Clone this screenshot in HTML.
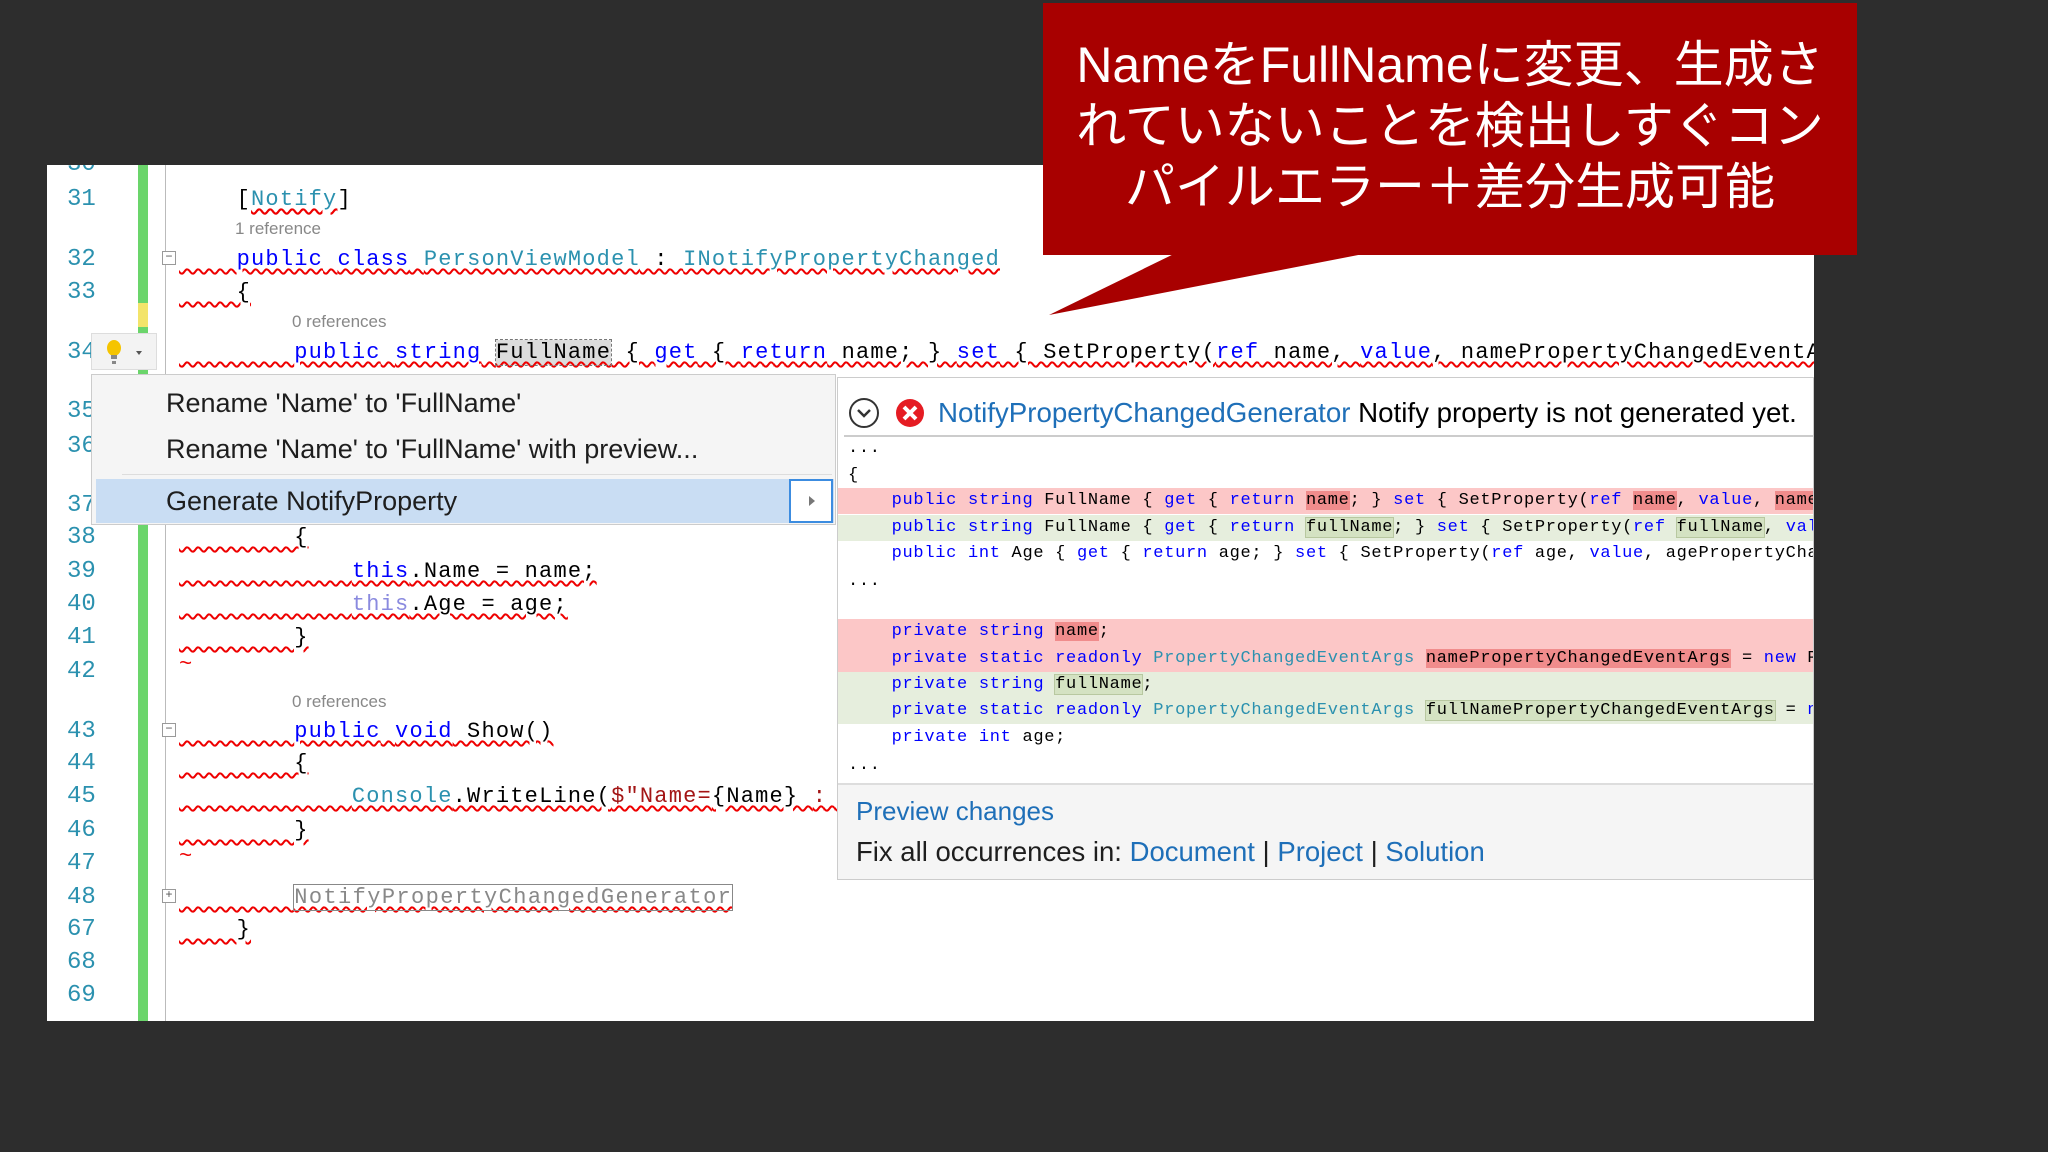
<!DOCTYPE html>
<html><head><meta charset="utf-8"><style>
*{margin:0;padding:0;box-sizing:border-box}
body{width:2048px;height:1152px;background:#2d2d2d;position:relative;overflow:hidden;font-family:"Liberation Sans",sans-serif}
.ed{position:absolute;left:47px;top:165px;width:1767px;height:856px;background:#fff;overflow:hidden}
.ln{position:absolute;left:20px;width:60px;font:24px "Liberation Mono",monospace;color:#2b91af;line-height:30px;margin-top:3px}
.c{position:absolute;left:132px;white-space:pre;font:22px "Liberation Mono",monospace;letter-spacing:1.2px;line-height:30px;color:#000;text-decoration:underline wavy #e00;text-decoration-thickness:1.5px;text-underline-offset:3px;margin-top:3px}
.k{color:#0000ff}.t{color:#2b91af}.s{color:#a31515}
.ref{position:absolute;font-size:17px;color:#888;white-space:pre;margin-top:2px}
.box{position:absolute;left:115px;width:14px;height:14px;border:1px solid #999;background:#fff;font:12px/11px "Liberation Mono";text-align:center;color:#555}
.menu{position:absolute;left:91px;top:374px;width:745px;height:151px;background:#f5f5f5;border:1px solid #ccc;font-size:27px;color:#1e1e1e}
.pv{position:absolute;left:837px;top:377px;width:977px;height:503px;background:#fff;border:1px solid #ccc;overflow:hidden}
.d{position:absolute;left:0;width:1000px;height:26px;white-space:pre;font:17px "Liberation Mono",monospace;letter-spacing:0.7px;line-height:26px;padding-left:10px}
.rd{background:#fcc7c7}.gr{background:#e6eedd}
.hr{background:#f08c8c}.hg{background:#d4e2c2;outline:1px solid #b8c8a0}
.lk{color:#1e6fb8}
</style></head><body>

<div class="ed">
 <div style="position:absolute;left:91px;top:0;width:10px;height:856px;background:#6bd56b"></div>
 <div style="position:absolute;left:91px;top:138px;width:10px;height:24px;background:#f3e46a"></div>
 <div style="position:absolute;left:118px;top:0;width:1px;height:856px;background:#bbb"></div>

 <div class="ln" style="top:-18px">30</div>
 <div class="ln" style="top:17px">31</div>
 <div class="ln" style="top:77px">32</div>
 <div class="ln" style="top:110px">33</div>
 <div class="ln" style="top:170px">34</div>
 <div class="ln" style="top:229px">35</div>
 <div class="ln" style="top:264px">36</div>
 <div class="ln" style="top:323px">37</div>
 <div class="ln" style="top:355px">38</div>
 <div class="ln" style="top:389px">39</div>
 <div class="ln" style="top:422px">40</div>
 <div class="ln" style="top:455px">41</div>
 <div class="ln" style="top:489px">42</div>
 <div class="ln" style="top:549px">43</div>
 <div class="ln" style="top:581px">44</div>
 <div class="ln" style="top:614px">45</div>
 <div class="ln" style="top:648px">46</div>
 <div class="ln" style="top:681px">47</div>
 <div class="ln" style="top:715px">48</div>
 <div class="ln" style="top:747px">67</div>
 <div class="ln" style="top:780px">68</div>
 <div class="ln" style="top:813px">69</div>

 <div class="c" style="top:17px;text-decoration:none">    [<span class="t" style="text-decoration:underline wavy #e00">Notify</span>]</div>
 <div class="ref" style="left:188px;top:52px">1 reference</div>
 <div class="box" style="top:86px">−</div>
 <div class="c" style="top:77px">    <span class="k">public</span> <span class="k">class</span> <span class="t">PersonViewModel</span> : <span class="t">INotifyPropertyChanged</span></div>
 <div class="c" style="top:110px">    {</div>
 <div class="ref" style="left:245px;top:145px">0 references</div>
 <div class="c" style="top:170px">        <span class="k">public</span> <span class="k">string</span> <span style="background:#dcdcdc;outline:1px dashed #777">FullName</span> { <span class="k">get</span> { <span class="k">return</span> name; } <span class="k">set</span> { SetProperty(<span class="k">ref</span> name, <span class="k">value</span>, namePropertyChangedEventArgs); } }</div>
 <div class="c" style="top:355px">        {</div>
 <div class="c" style="top:389px">            <span class="k">this</span>.Name = name;</div>
 <div class="c" style="top:422px">            <span class="k" style="color:#8a8adf">this</span>.Age = age;</div>
 <div class="c" style="top:455px">        }</div>
 <div class="c" style="top:482px;text-decoration:none;color:#e00">~</div>
 <div class="ref" style="left:245px;top:525px">0 references</div>
 <div class="box" style="top:558px">−</div>
 <div class="c" style="top:549px">        <span class="k">public</span> <span class="k">void</span> Show()</div>
 <div class="c" style="top:581px">        {</div>
 <div class="c" style="top:614px">            <span class="t">Console</span>.WriteLine(<span class="s">$"Name=</span>{Name} <span class="s">: </span></div>
 <div class="c" style="top:648px">        }</div>
 <div class="c" style="top:674px;text-decoration:none;color:#e00">~</div>
 <div class="box" style="top:724px">+</div>
 <div class="c" style="top:715px">        <span style="color:#888;outline:1px solid #888;text-decoration:none;letter-spacing:1.4px">NotifyPropertyChangedGenerator</span></div>
 <div class="c" style="top:747px">    }</div>
</div>

<!-- lightbulb -->
<div style="position:absolute;left:91px;top:333px;width:66px;height:37px;background:#f3f3f3;border:1px solid #ddd">
 <svg width="66" height="37"><ellipse cx="22" cy="14" rx="7" ry="8" fill="#f5c400"/><rect x="19" y="21" width="6" height="4" fill="#888"/><rect x="20" y="27" width="4" height="3" fill="#888"/><path d="M44 17 l6 0 l-3 4z" fill="#555"/></svg>
</div>

<div class="menu">
 <div style="position:absolute;left:74px;top:13px">Rename 'Name' to 'FullName'</div>
 <div style="position:absolute;left:74px;top:59px">Rename 'Name' to 'FullName' with preview...</div>
 <div style="position:absolute;left:30px;top:99px;width:710px;height:1px;background:#ddd"></div>
 <div style="position:absolute;left:4px;top:104px;width:738px;height:44px;background:#c9ddf3"></div>
 <div style="position:absolute;left:74px;top:111px">Generate NotifyProperty</div>
 <div style="position:absolute;left:697px;top:104px;width:44px;height:44px;border:2px solid #3c8ce0;background:#fff"><svg width="40" height="40"><path d="M18 15 l6 5 l-6 5z" fill="#777"/></svg></div>
</div>

<div class="pv">
 <svg style="position:absolute;left:10px;top:18px" width="90" height="34"><circle cx="16" cy="17" r="14" fill="#fff" stroke="#333" stroke-width="2"/><path d="M10 14 l6 6 l6 -6" stroke="#333" stroke-width="2.5" fill="none"/><circle cx="62" cy="17" r="14" fill="#e51c23"/><path d="M56 11 l12 12 M68 11 l-12 12" stroke="#fff" stroke-width="4"/></svg>
 <div style="position:absolute;left:100px;top:19px;font-size:27.7px;white-space:nowrap"><span class="lk">NotifyPropertyChangedGenerator</span> Notify property is not generated yet.</div>
 <div style="position:absolute;left:6px;top:57px;width:980px;height:2px;background:#ccc"></div>
 <div class="d" style="top:58px;padding-left:10px">...</div>
 <div class="d" style="top:85px">{</div>
 <div class="d rd" style="top:110px">    <span class="k">public</span> <span class="k">string</span> FullName { <span class="k">get</span> { <span class="k">return</span> <span class="hr">name</span>; } <span class="k">set</span> { SetProperty(<span class="k">ref</span> <span class="hr">name</span>, <span class="k">value</span>, <span class="hr">namePropertyChangedEventArgs</span>); } }</div>
 <div class="d gr" style="top:137px">    <span class="k">public</span> <span class="k">string</span> FullName { <span class="k">get</span> { <span class="k">return</span> <span class="hg">fullName</span>; } <span class="k">set</span> { SetProperty(<span class="k">ref</span> <span class="hg">fullName</span>, <span class="k">value</span>, fullName</div>
 <div class="d" style="top:163px">    <span class="k">public</span> <span class="k">int</span> Age { <span class="k">get</span> { <span class="k">return</span> age; } <span class="k">set</span> { SetProperty(<span class="k">ref</span> age, <span class="k">value</span>, agePropertyChangedEventArgs); } }</div>
 <div class="d" style="top:191px">...</div>
 <div class="d rd" style="top:241px;height:27px">    <span class="k">private</span> <span class="k">string</span> <span class="hr">name</span>;</div>
 <div class="d rd" style="top:268px">    <span class="k">private</span> <span class="k">static</span> <span class="k">readonly</span> <span class="t">PropertyChangedEventArgs</span> <span class="hr">namePropertyChangedEventArgs</span> = <span class="k">new</span> PropertyChangedEventArgs</div>
 <div class="d gr" style="top:294px">    <span class="k">private</span> <span class="k">string</span> <span class="hg">fullName</span>;</div>
 <div class="d gr" style="top:320px">    <span class="k">private</span> <span class="k">static</span> <span class="k">readonly</span> <span class="t">PropertyChangedEventArgs</span> <span class="hg">fullNamePropertyChangedEventArgs</span> = <span class="k">new</span></div>
 <div class="d" style="top:347px">    <span class="k">private</span> <span class="k">int</span> age;</div>
 <div class="d" style="top:375px">...</div>
 <div style="position:absolute;left:0;top:405px;width:980px;height:100px;background:#f5f5f5;border-top:2px solid #ddd"></div>
 <div class="lk" style="position:absolute;left:18px;top:418px;font-size:26px">Preview changes</div>
 <div style="position:absolute;left:18px;top:458px;font-size:27.5px;white-space:nowrap;color:#1e1e1e">Fix all occurrences in: <span class="lk">Document</span> | <span class="lk">Project</span> | <span class="lk">Solution</span></div>
</div>

<!-- callout -->
<svg style="position:absolute;left:0;top:0" width="2048" height="400"><polygon points="1182,250 1049,315 1384,250" fill="#a80000"/></svg>
<div style="position:absolute;left:1043px;top:3px;width:814px;height:252px;background:#a80000;color:#fff;font-family:'Liberation Sans','Noto Sans CJK JP',sans-serif;font-size:50px;line-height:61px;text-align:center;padding-top:32px">NameをFullNameに変更、生成さ<br>れていないことを検出しすぐコン<br>パイルエラー＋差分生成可能</div>
</body></html>
